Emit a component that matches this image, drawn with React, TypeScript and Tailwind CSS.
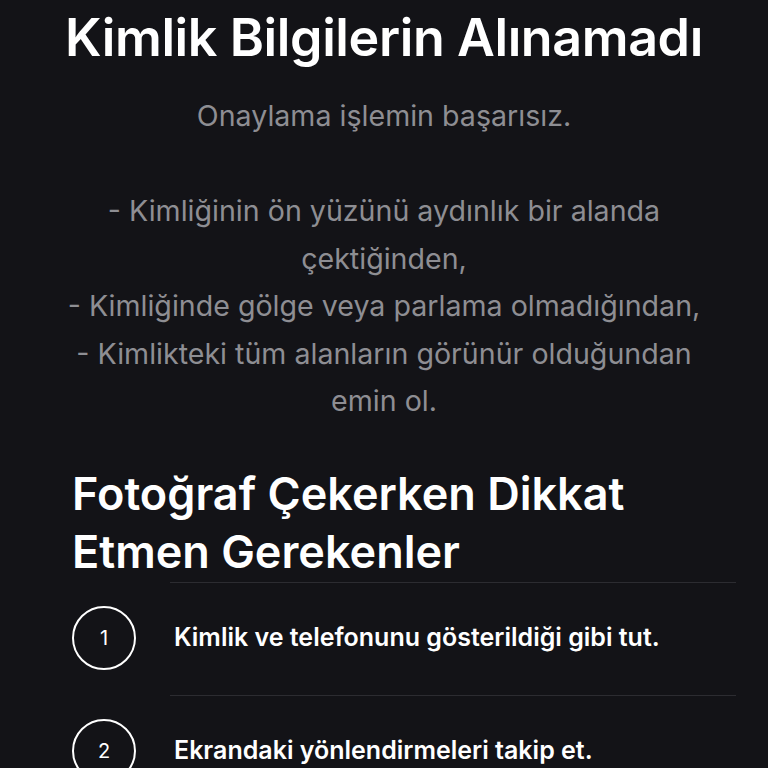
import React from 'react';

const BODY = [
  'Onaylama işlemin başarısız.',
  '',
  '- Kimliğinin ön yüzünü aydınlık bir alanda çektiğinden,',
  '- Kimliğinde gölge veya parlama olmadığından,',
  '- Kimlikteki tüm alanların görünür olduğundan emin ol.',
];

const STEPS = [
  'Kimlik ve telefonunu gösterildiği gibi tut.',
  'Ekrandaki yönlendirmeleri takip et.',
  'Kimliğinin ön yüzünü çerçeveye yerleştir.',
];

const App = () => {
  return (
    <div
      className="min-h-screen w-full bg-[#131317] text-white"
      style={{ fontFamily: 'Inter, "Noto Sans", "Liberation Sans", sans-serif' }}
    >
      <div className="px-[64px] pt-[6px]">
        <h1 className="text-center text-[52px] leading-[64px] font-semibold tracking-[-0.4px]">
          Kimlik Bilgilerin Alınamadı
        </h1>
        <div className="mt-[22px] text-center text-[28.6px] leading-[47.5px] text-[#8e8e93]">
          {BODY.map((line, i) => (
            <p key={i} className="min-h-[47.5px]">
              {line}
            </p>
          ))}
        </div>
      </div>

      <div className="pl-[72px] pr-[32px] mt-[40px]">
        <h2 className="text-[45px] leading-[58px] font-semibold">
          Fotoğraf Çekerken Dikkat
          <br />
          Etmen Gerekenler
        </h2>
        <div className="mt-px">
          {STEPS.map((step, i) => (
            <div key={i} className="flex items-center h-[113px] relative">
              <div className="absolute left-[98px] right-0 top-0 h-px bg-[#2c2c31]" />
              <div className="w-[64px] h-[64px] shrink-0 rounded-full border-2 border-white flex items-center justify-center text-[20px]">
                {i + 1}
              </div>
              <p className="ml-[38px] text-[25px] font-semibold">{step}</p>
            </div>
          ))}
        </div>
      </div>
    </div>
  );
};

export default App;
